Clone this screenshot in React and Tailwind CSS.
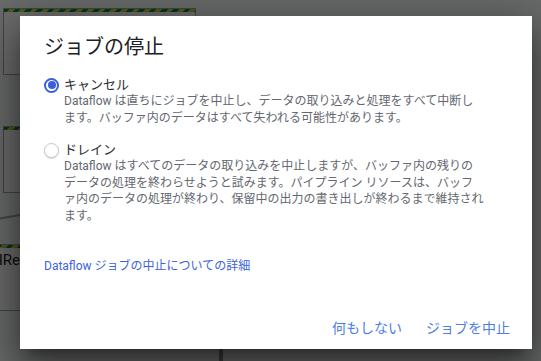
import React from "react";

const font = "font-['Roboto','Noto_Sans_CJK_JP',sans-serif]";

// graph nodes behind the overlay
const GraphNode = ({ className, label }) => (
  <div className={`absolute border border-[#9aa0a6] bg-[#f8f9fa] ${className}`}>
    <div className="h-[3px] bg-[repeating-linear-gradient(135deg,#0b8043_0_4px,#c0ca33_4px_8px)]" />
    {label && (
      <div className="pl-[2px] pt-[3px] text-[15px] leading-[18px] text-[#202124]">{label}</div>
    )}
  </div>
);

const Radio = ({ checked }) =>
  checked ? (
    <span className="flex h-[15px] w-[15px] shrink-0 items-center justify-center rounded-full border-2 border-[#3b5fd9]">
      <span className="h-[8px] w-[8px] rounded-full bg-[#3b5fd9]" />
    </span>
  ) : (
    <span className="h-[15px] w-[15px] shrink-0 rounded-full border border-[#c8c8c8] bg-white shadow-[0_1px_1px_rgba(0,0,0,0.15)]" />
  );

const Option = ({ checked, label, lines, className }) => (
  <div className={className}>
    <div className="flex items-center gap-[5px]">
      <Radio checked={checked} />
      <span className="text-[13px] leading-[16px] text-[#2b2d30]">{label}</span>
    </div>
    <div className="pl-[20px] text-[12px] leading-[16.5px] text-[#646870]">
      {lines.map((l) => (
        <div key={l} className="whitespace-nowrap">
          {l}
        </div>
      ))}
    </div>
  </div>
);

export default function App() {
  return (
    <div className={`relative h-[361px] w-[541px] overflow-hidden bg-[#f1f3f4] ${font}`}>
      <GraphNode className="left-[3px] top-[8px] h-[67px] w-[193px]" />
      <GraphNode className="left-[3px] top-[126px] h-[67px] w-[193px]" />
      <div className="absolute left-[-20px] top-[214px] h-[2px] w-[80px] -rotate-[10deg] bg-[#9aa0a6]" />
      <GraphNode className="left-[-4px] top-[244px] h-[67px] w-[200px]" label="lRe" />
      <div className="absolute left-[219px] top-[300px] h-[61px] w-[4px] bg-[#8a8f94]" />

      <div className="absolute inset-0 bg-black/[0.56]" />

      <div className="relative flex pl-[20px] pt-[16px]">
        <div className="flex h-[333px] w-[512px] flex-col bg-white shadow-[0_11px_15px_-7px_rgba(0,0,0,0.35),0_24px_38px_3px_rgba(0,0,0,0.3),0_9px_46px_8px_rgba(0,0,0,0.25)]">
          <div className="px-[24px] pt-[17px]">
            <h1 className="text-[20px] font-normal leading-[28px] text-[#202124]">ジョブの停止</h1>
            <Option
              className="mt-[16px]"
              checked
              label="キャンセル"
              lines={[
                "Dataflow は直ちにジョブを中止し、データの取り込みと処理をすべて中断し",
                "ます。バッファ内のデータはすべて失われる可能性があります。",
              ]}
            />
            <Option
              className="mt-[16px]"
              label="ドレイン"
              lines={[
                "Dataflow はすべてのデータの取り込みを中止しますが、バッファ内の残りの",
                "データの処理を終わらせようと試みます。パイプライン リソースは、バッフ",
                "ァ内のデータの処理が終わり、保留中の出力の書き出しが終わるまで維持され",
                "ます。",
              ]}
            />
            <a className="mt-[34px] block text-[12px] leading-[16px] text-[#3d63dc]">
              Dataflow ジョブの中止についての詳細
            </a>
          </div>
          <div className="mt-auto flex justify-end gap-[8px] pb-[3px] pr-[14px]">
            <button className="h-[36px] px-[8px] text-[14px] text-[#4d7ee6]">何もしない</button>
            <button className="h-[36px] px-[8px] text-[14px] text-[#4d7ee6]">ジョブを中止</button>
          </div>
        </div>
      </div>
    </div>
  );
}
